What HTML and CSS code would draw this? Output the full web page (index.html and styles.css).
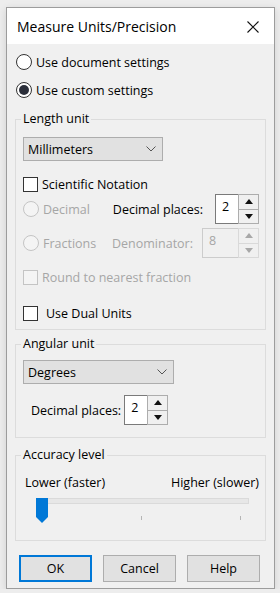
FILE: index.html
```html
<!DOCTYPE html>
<html lang="en">
<head>
  <meta charset="UTF-8" />
  <title>Measure Units/Precision</title>
  <link rel="stylesheet" href="styles.css">
</head>
<body>
  <div class="window">
    <div class="titlebar">
      <span class="title">Measure Units/Precision</span>
      <svg class="close" width="12" height="12" viewBox="0 0 12 12">
        <path d="M0.5 0.5 L11.5 11.5 M11.5 0.5 L0.5 11.5" stroke="#111" stroke-width="1.1" fill="none"/>
      </svg>
    </div>

    <div class="content">
      <div class="radio-row top">
        <span class="radio"></span>
        <span>Use document settings</span>
      </div>
      <div class="radio-row top">
        <span class="radio checked"></span>
        <span>Use custom settings</span>
      </div>

      <fieldset class="group length">
        <legend>Length unit</legend>
        <div class="select select-length">
          <span>Millimeters</span>
          <svg width="10" height="6" viewBox="0 0 10 6"><path d="M0.5 0.5 L5 5 L9.5 0.5" stroke="#555" fill="none"/></svg>
        </div>

        <div class="check-row sci">
          <span class="checkbox"></span>
          <span>Scientific Notation</span>
        </div>

        <div class="opt-row decimal">
          <div class="radio-row disabled">
            <span class="radio"></span>
            <span>Decimal</span>
          </div>
          <div class="field">
            <span class="field-label">Decimal places:</span>
            <div class="spin">
              <span class="spin-value">2</span>
              <span class="spin-buttons">
                <span class="spin-btn"><svg width="8" height="5" viewBox="0 0 8 5"><path d="M4 0 L8 5 L0 5 Z" fill="#111"/></svg></span>
                <span class="spin-btn"><svg width="8" height="5" viewBox="0 0 8 5"><path d="M0 0 L8 0 L4 5 Z" fill="#111"/></svg></span>
              </span>
            </div>
          </div>
        </div>

        <div class="opt-row fractions">
          <div class="radio-row disabled">
            <span class="radio"></span>
            <span>Fractions</span>
          </div>
          <div class="field disabled">
            <span class="field-label">Denominator:</span>
            <div class="spin wide">
              <span class="spin-value">8</span>
              <span class="spin-buttons">
                <span class="spin-btn"><svg width="8" height="5" viewBox="0 0 8 5"><path d="M4 0 L8 5 L0 5 Z" fill="#a8a8a8"/></svg></span>
                <span class="spin-btn"><svg width="8" height="5" viewBox="0 0 8 5"><path d="M0 0 L8 0 L4 5 Z" fill="#a8a8a8"/></svg></span>
              </span>
            </div>
          </div>
        </div>

        <div class="check-row round disabled">
          <span class="checkbox"></span>
          <span>Round to nearest fraction</span>
        </div>

        <div class="check-row dual">
          <span class="checkbox"></span>
          <span class="dual-label">Use Dual Units</span>
        </div>
      </fieldset>

      <fieldset class="group angular">
        <legend>Angular unit</legend>
        <div class="select select-angular">
          <span>Degrees</span>
          <svg width="10" height="6" viewBox="0 0 10 6"><path d="M0.5 0.5 L5 5 L9.5 0.5" stroke="#555" fill="none"/></svg>
        </div>
        <div class="field angular-places">
          <span class="field-label">Decimal places:</span>
          <div class="spin">
            <span class="spin-value">2</span>
            <span class="spin-buttons">
              <span class="spin-btn"><svg width="8" height="5" viewBox="0 0 8 5"><path d="M4 0 L8 5 L0 5 Z" fill="#111"/></svg></span>
              <span class="spin-btn"><svg width="8" height="5" viewBox="0 0 8 5"><path d="M0 0 L8 0 L4 5 Z" fill="#111"/></svg></span>
            </span>
          </div>
        </div>
      </fieldset>

      <fieldset class="group accuracy">
        <legend>Accuracy level</legend>
        <div class="slider-labels">
          <span>Lower (faster)</span>
          <span>Higher (slower)</span>
        </div>
        <div class="slider">
          <div class="track"></div>
          <svg class="thumb" width="12" height="25" viewBox="0 0 12 25">
            <path d="M0 0 H12 V19 L6 25 L0 19 Z" fill="#0078d7"/>
          </svg>
          <div class="ticks">
            <span class="tick"></span>
            <span class="tick"></span>
            <span class="tick"></span>
          </div>
        </div>
      </fieldset>

      <div class="buttons">
        <button class="btn default">OK</button>
        <button class="btn">Cancel</button>
        <button class="btn">Help</button>
      </div>
    </div>
  </div>
</body>
</html>
```

FILE: styles.css
```css
body {
  margin: 0;
  background-color: #ededed;
  font-family: 'Open Sans', 'Noto Sans', sans-serif;
  font-size: 12.5px;
  color: #000;
}

.window {
  box-sizing: border-box;
  width: 269px;
  height: 582px;
  margin: 7px 0 0 6px;
  border: 1px solid #9c9c9c;
  background-color: #f0f0f0;
  box-shadow: 0 2px 8px rgba(0, 0, 0, 0.12);
}

.titlebar {
  height: 36px;
  background-color: #fff;
  display: flex;
  align-items: center;
  justify-content: space-between;
  padding: 0 15px 0 10px;
}

.title {
  font-size: 14px;
}

.close {
  margin-top: 1px;
}

.content {
  padding: 4px 8px 0;
}

/* radios and checkboxes */

.radio-row,
.check-row {
  display: flex;
  align-items: center;
  gap: 4px;
}

.radio-row.top {
  height: 28px;
  padding-left: 1px;
}

.radio {
  box-sizing: border-box;
  width: 16px;
  height: 16px;
  border: 1px solid #333;
  border-radius: 50%;
  background-color: #fff;
  display: flex;
  align-items: center;
  justify-content: center;
}

.radio.checked::after {
  content: "";
  width: 10px;
  height: 10px;
  border-radius: 50%;
  background-color: #2b2f3a;
}

.checkbox {
  box-sizing: border-box;
  width: 15px;
  height: 15px;
  border: 1px solid #333;
  background-color: #fff;
}

.disabled {
  color: #a6a6a6;
}

.disabled .radio,
.disabled .checkbox {
  border-color: #c4c4c4;
  background-color: #f4f4f4;
}

/* group boxes */

.group {
  margin: 0;
  border: 1px solid #dcdcdc;
  padding: 0 6px 8px 7px;
}

.group legend {
  padding: 0 2px;
  margin-left: -2px;
  line-height: 16px;
}

.length {
  margin-top: 7px;
}

.angular {
  margin-top: 6px;
  padding-bottom: 12px;
}

.accuracy {
  margin-top: 9px;
  padding-bottom: 12px;
}

.select {
  box-sizing: border-box;
  height: 24px;
  border: 1px solid #adadad;
  background-color: #e1e1e1;
  display: flex;
  align-items: center;
  justify-content: space-between;
  padding: 0 6px 0 4px;
}

.select-length {
  margin-top: 10px;
  width: 140px;
}

.select-angular {
  margin-top: 8px;
  width: 151px;
}

.sci {
  margin-top: 15px;
  height: 16px;
}

.opt-row {
  display: flex;
  align-items: center;
  justify-content: space-between;
  height: 30px;
}

.decimal {
  margin-top: 2px;
}

.fractions {
  margin-top: 4px;
}

.field {
  display: flex;
  align-items: center;
  gap: 12px;
}

.field.disabled {
  gap: 9px;
}

.round {
  margin-top: 11px;
  height: 16px;
}

.dual {
  margin-top: 20px;
  height: 16px;
}

.dual-label {
  margin-left: 4px;
}

.angular-places {
  margin-top: 11px;
  padding-left: 8px;
  gap: 3px;
}

/* spin boxes */

.spin {
  display: flex;
  height: 30px;
}

.spin-value {
  box-sizing: border-box;
  width: 23px;
  border: 1px solid #7a7a7a;
  border-right: none;
  background-color: #fff;
  padding: 3px 0 0 6px;
}

.spin.wide .spin-value {
  width: 36px;
}

.spin-buttons {
  box-sizing: border-box;
  width: 21px;
  border: 1px solid #adadad;
  display: flex;
  flex-direction: column;
}

.spin-btn {
  flex: 1;
  display: flex;
  align-items: center;
  justify-content: center;
  background-color: #f0f0f0;
}

.spin-btn + .spin-btn {
  border-top: 1px solid #adadad;
}

.disabled .spin-value {
  border-color: #cccccc;
  background-color: #f0f0f0;
  color: #a6a6a6;
}

.disabled .spin-buttons,
.disabled .spin-btn + .spin-btn {
  border-color: #d9d9d9;
}

/* slider */

.slider-labels {
  margin-top: 11px;
  height: 16px;
  display: flex;
  align-items: center;
  justify-content: space-between;
  padding: 0 0 0 2px;
}

.slider {
  margin-top: 3px;
  height: 30px;
  position: relative;
}

.track {
  margin: 8px 10px 0 22px;
  height: 4px;
  border: 1px solid #dadada;
  background-color: #e7e7e7;
}

.thumb {
  position: absolute;
  left: 13px;
  top: 0;
}

.ticks {
  display: flex;
  justify-content: space-between;
  margin: 12px 18px 0 19px;
}

.tick {
  width: 1px;
  height: 4px;
  background-color: #b5b5b5;
}

/* buttons */

.buttons {
  display: flex;
  gap: 11px;
  margin: 14px 0 0 4px;
}

.btn {
  box-sizing: border-box;
  width: 73px;
  height: 27px;
  border: 1px solid #adadad;
  background-color: #e1e1e1;
  font-family: inherit;
  font-size: 12.5px;
  color: #000;
  padding: 0;
}

.btn.default {
  border: 2px solid #0078d7;
}
```
